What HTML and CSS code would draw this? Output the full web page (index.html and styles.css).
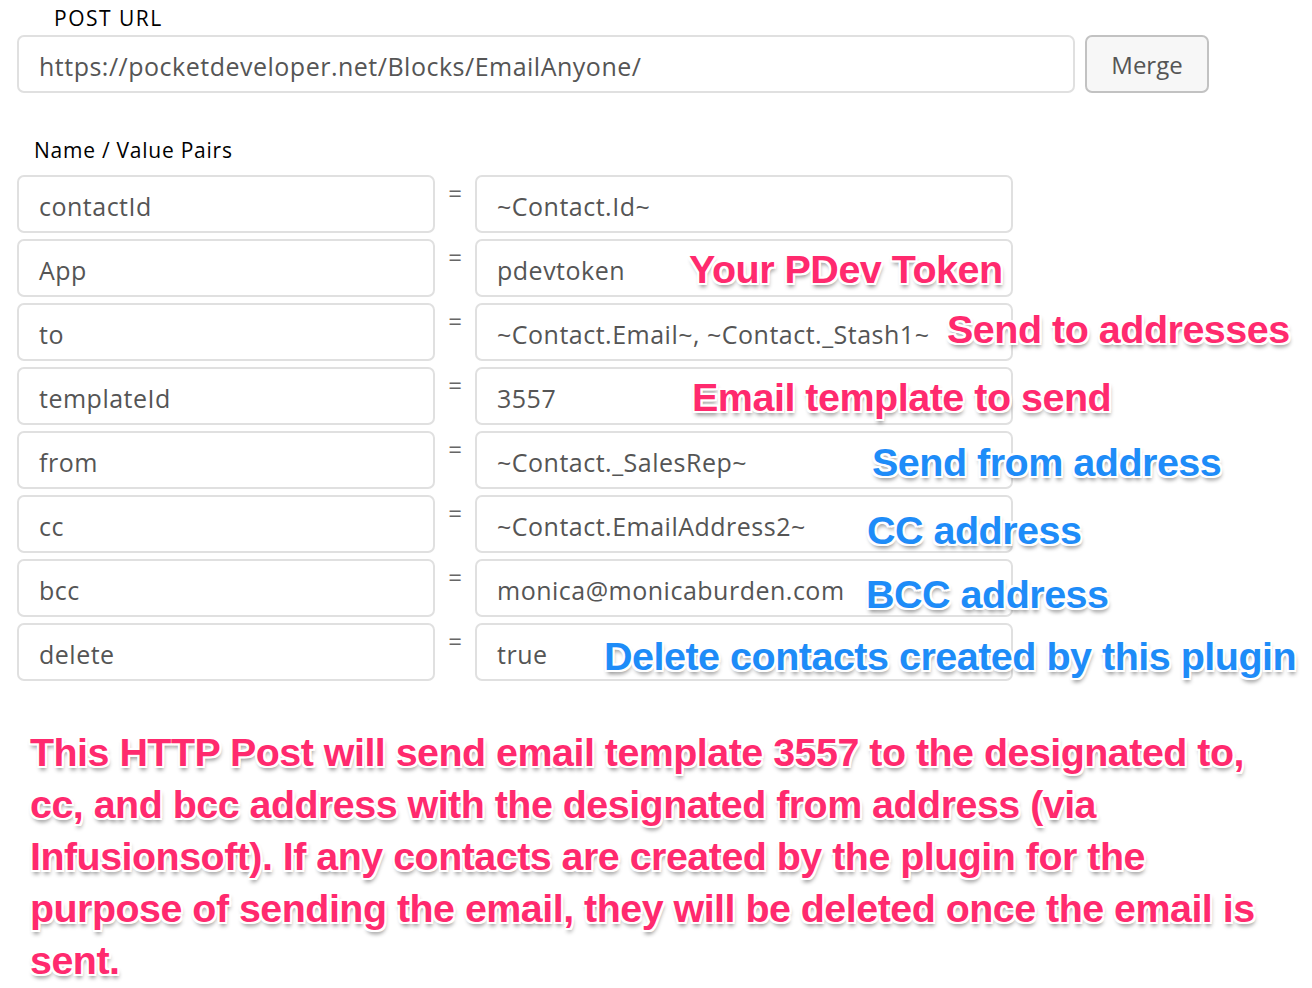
FILE: index.html
```html
<!DOCTYPE html>
<html>
<head>
<meta charset="utf-8">
<link rel="stylesheet" href="styles.css">
</head>
<body>
<div class="page">
  <div class="field-label">POST URL</div>
  <div class="url-row">
    <div class="input url-input">https://pocketdeveloper.net/Blocks/EmailAnyone/</div>
    <button class="btn">Merge</button>
  </div>

  <div class="pairs-label">Name / Value Pairs</div>
  <div class="pairs">
    <div class="pair">
      <div class="input name">contactId</div><div class="eq">=</div><div class="input value">~Contact.Id~</div>
    </div>
    <div class="pair">
      <div class="input name">App</div><div class="eq">=</div><div class="input value">pdevtoken</div>
      <span class="note pink n-token">Your PDev Token</span>
    </div>
    <div class="pair">
      <div class="input name">to</div><div class="eq">=</div><div class="input value">~Contact.Email~, ~Contact._Stash1~</div>
      <span class="note pink n-to">Send to addresses</span>
    </div>
    <div class="pair">
      <div class="input name">templateId</div><div class="eq">=</div><div class="input value">3557</div>
      <span class="note pink n-tpl">Email template to send</span>
    </div>
    <div class="pair">
      <div class="input name">from</div><div class="eq">=</div><div class="input value">~Contact._SalesRep~</div>
      <span class="note blue n-from">Send from address</span>
    </div>
    <div class="pair">
      <div class="input name">cc</div><div class="eq">=</div><div class="input value">~Contact.EmailAddress2~</div>
      <span class="note blue n-cc">CC address</span>
    </div>
    <div class="pair">
      <div class="input name">bcc</div><div class="eq">=</div><div class="input value">monica@monicaburden.com</div>
      <span class="note blue n-bcc">BCC address</span>
    </div>
    <div class="pair">
      <div class="input name">delete</div><div class="eq">=</div><div class="input value">true</div>
      <span class="note blue n-del">Delete contacts created by this plugin</span>
    </div>
  </div>

  <p class="summary">This HTTP Post will send email template 3557 to the designated to, cc, and bcc address with the designated from address (via Infusionsoft). If any contacts are created by the plugin for the purpose of sending the email, they will be deleted once the email is sent.</p>
</div>
</body>
</html>
```

FILE: styles.css
```css
* { box-sizing: border-box; }
html, body { margin: 0; padding: 0; background: #fff; }
body { font-family: "Open Sans", Lato, sans-serif; color: #000; }

.page { width: 1312px; height: 988px; overflow: hidden; padding: 5px 0 0 17px; }

.field-label { font-size: 21px; line-height: 26px; margin-left: 37px; letter-spacing: 1.5px; }

.url-row { display: flex; gap: 10px; margin-top: 4px; }
.input {
  height: 58px;
  border: 2px solid #e0e0e0;
  border-radius: 7px;
  background: #fff;
  font-size: 25px;
  letter-spacing: 0.5px;
  color: #555;
  padding: 3px 0 0 20px;
  display: flex;
  align-items: center;
  white-space: nowrap;
}
.url-input { width: 1058px; }
.btn {
  width: 124px; height: 58px;
  background: #f7f7f7;
  border: 2px solid #c2c2c2;
  border-radius: 7px;
  font-family: inherit;
  font-size: 24px;
  color: #555;
  padding: 0;
}

.pairs-label { font-size: 21px; line-height: 26px; margin: 44px 0 0 17px; letter-spacing: 0.75px; }
.pairs { display: flex; flex-direction: column; gap: 6px; margin-top: 12px; }
.pair { display: flex; position: relative; height: 58px; }
.name { width: 418px; }
.eq { width: 40px; text-align: center; font-size: 24px; color: #666; padding-top: 6px; line-height: 24px; }
.value { width: 538px; }

.note {
  position: absolute;
  font-family: "Liberation Sans", Arial, sans-serif;
  font-weight: bold;
  font-size: 39.5px;
  line-height: 44px;
  letter-spacing: -0.5px;
  white-space: nowrap;
  text-shadow:
    2px 0 0 #fff, -2px 0 0 #fff, 0 2px 0 #fff, 0 -2px 0 #fff,
    2px 2px 0 #fff, -2px -2px 0 #fff, 2px -2px 0 #fff, -2px 2px 0 #fff,
    1px 4px 4px rgba(0,0,0,0.45);
}
.pink { color: #ff2a6e; }
.blue { color: #1e8cf8; }
.n-token { left: 672px; top: 8px; }
.n-to { left: 930px; top: 4px; }
.n-tpl { left: 675px; top: 8px; }
.n-from { left: 855px; top: 9px; }
.n-cc { left: 850px; top: 13px; }
.n-bcc { left: 849px; top: 13px; }
.n-del { left: 587px; top: 11px; }

.summary {
  margin: 45px 0 0 13px;
  width: 1260px;
  font-family: "Liberation Sans", Arial, sans-serif;
  font-weight: bold;
  font-size: 39.4px;
  line-height: 52px;
  letter-spacing: -0.5px;
  color: #ff2a6e;
  text-shadow:
    2px 0 0 #fff, -2px 0 0 #fff, 0 2px 0 #fff, 0 -2px 0 #fff,
    2px 2px 0 #fff, -2px -2px 0 #fff, 2px -2px 0 #fff, -2px 2px 0 #fff,
    1px 4px 4px rgba(0,0,0,0.45);
}
```
